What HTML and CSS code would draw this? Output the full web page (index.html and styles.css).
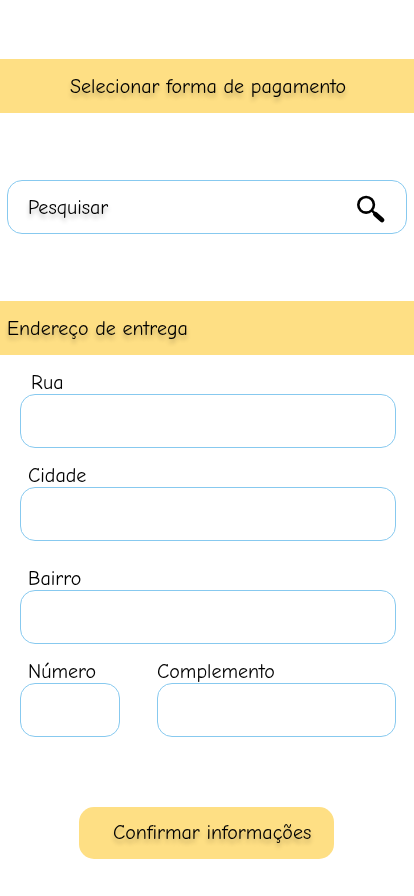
FILE: index.html
```html
<!DOCTYPE html>
<html lang="pt-BR">
<head>
<meta charset="utf-8">
<meta name="viewport" content="width=device-width, initial-scale=1">
<title>Endereço de entrega</title>
<link rel="stylesheet" href="styles.css">
</head>
<body>
<main class="screen">
  <header class="banner banner-top"><h1>Selecionar forma de pagamento</h1></header>
  <div class="search">
    <span>Pesquisar</span>
    <svg class="search-icon" viewBox="0 0 30 30" aria-hidden="true">
      <circle cx="10.1" cy="10.8" r="7.8" fill="none" stroke="#000" stroke-width="2.6"/>
      <path d="M15.5 16.2L19 19.7" stroke="#000" stroke-width="2.4"/>
      <path d="M19.5 20.3L26 26" stroke="#000" stroke-width="4.8" stroke-linecap="round"/>
    </svg>
  </div>
  <div class="banner banner-address"><h2>Endereço de entrega</h2></div>
  <form class="form">
    <label class="field"><span class="label t-rua">Rua</span><span class="box"></span></label>
    <label class="field"><span class="label">Cidade</span><span class="box"></span></label>
    <label class="field field-bairro"><span class="label">Bairro</span><span class="box"></span></label>
    <div class="row">
      <label class="field"><span class="label">Número</span><span class="box"></span></label>
      <label class="field"><span class="label t-comp">Complemento</span><span class="box"></span></label>
    </div>
    <button class="confirm" type="button">Confirmar informações</button>
  </form>
</main>
</body>
</html>
```
FILE: styles.css
```css
* { box-sizing: border-box; }
body {
  margin: 0;
  background: #fff;
  color: #000;
  font: 400 20px/24px "Comic Neue", Inter, "Open Sans", sans-serif;
}
h1, h2 { margin: 0; font: inherit; white-space: nowrap; }
.screen { width: 414px; height: 896px; padding-top: 59px; overflow: hidden; will-change: transform; }
.banner {
  display: flex;
  align-items: center;
  height: 54px;
  padding-top: 2px;
  background: #fedf84;
  text-shadow: 0 4px 4px rgba(0, 0, 0, .25);
}
.banner-top { padding-left: 70px; }
.banner-address { padding-left: 7px; }
.search {
  display: flex;
  align-items: center;
  justify-content: space-between;
  height: 54px;
  margin: 67px 7px;
  padding: 2px 20px 0;
  border: 1px solid #87c9ef;
  border-radius: 15px;
  text-shadow: 0 4px 4px rgba(0, 0, 0, .25);
}
.search-icon { width: 30px; height: 30px; margin-top: 1px; }
.form { padding: 15px 18px 0 20px; }
.field { display: block; height: 78px; margin-bottom: 15px; }
.field-bairro { margin-top: 25px; }
.label { display: block; height: 24px; padding-left: 8px; line-height: 26px; }
.box { display: block; height: 54px; border: 1px solid #87c9ef; border-radius: 15px; }
.row { display: grid; grid-template-columns: 100px 239px; column-gap: 37px; }
.t-rua { padding-left: 11px; }
.t-comp { padding-left: 0; }
.confirm {
  display: flex;
  align-items: center;
  width: 255px;
  height: 52px;
  margin: 55px 0 0 59px;
  padding: 0 0 0 34px;
  border: 0;
  border-radius: 15px;
  background: #fedf84;
  color: #000;
  font: inherit;
  white-space: nowrap;
  text-shadow: 0 4px 4px rgba(0, 0, 0, .25);
}
```
